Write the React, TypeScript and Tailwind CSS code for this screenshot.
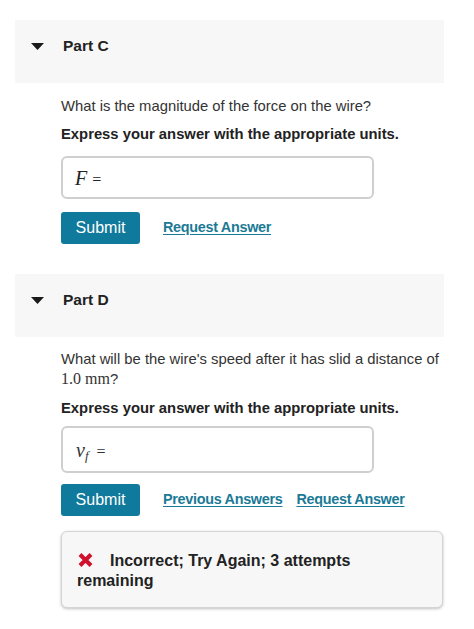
import React from "react";

const Header = ({ title }: { title: string }) => (
  <div className="flex items-center h-[63px] bg-[#f7f7f7] pl-[16px] pb-[11px]">
    <svg width="13" height="7" viewBox="0 0 13 7" className="mr-[19px]">
      <path d="M0 0 H13 L6.5 7 Z" fill="#1a1a1a" />
    </svg>
    <span className="text-[15.5px] font-bold text-[#222]">{title}</span>
  </div>
);

const Link = ({ children }: { children: React.ReactNode }) => (
  <a className="text-[14.4px] tracking-[-0.3px] font-bold text-[#1a7a96] underline underline-offset-2 cursor-pointer">{children}</a>
);

const SubmitButton = () => (
  <button className="w-[79px] h-[32px] rounded-[3px] bg-[#0f7a9b] text-white text-[16px]">Submit</button>
);

const mathFont = { fontFamily: '"Liberation Serif", "DejaVu Serif", serif' };

export default function App() {
  return (
    <div className="min-h-screen bg-white pt-[20px] pl-[15px] pr-[30px] text-[#333]" style={{ fontFamily: '"Liberation Sans", Arial, sans-serif' }}>
      <Header title="Part C" />
      <div className="pl-[46px] pt-[13px]">
        <p className="text-[14.8px] leading-[20px] text-[#333]">What is the magnitude of the force on the wire?</p>
        <p className="mt-[8px] text-[14.8px] leading-[20px] font-bold text-[#222]">Express your answer with the appropriate units.</p>
        <div className="mt-[12px] w-[313px] h-[43px] rounded-[6px] border-2 border-[#cfcfcf] flex items-center pl-[12px]">
          <span className="text-[20px] text-[#222]" style={mathFont}>
            <i>F</i> <span className="text-[16px]">=</span>
          </span>
        </div>
        <div className="mt-[13px] flex items-center gap-[23px]">
          <SubmitButton />
          <Link>Request Answer</Link>
        </div>
      </div>

      <div className="mt-[30px]">
        <Header title="Part D" />
      </div>
      <div className="pl-[46px] pt-[12px]">
        <p className="text-[14.8px] leading-[20px] text-[#333]">
          What will be the wire's speed after it has slid a distance of{" "}
          <span className="text-[16px]" style={mathFont}>1.0 mm</span>?
        </p>
        <p className="mt-[9px] text-[14.8px] leading-[20px] font-bold text-[#222]">Express your answer with the appropriate units.</p>
        <div className="mt-[8px] w-[313px] h-[47px] rounded-[6px] border-2 border-[#cfcfcf] flex items-center pl-[13px]">
          <span className="text-[20px] text-[#333]" style={mathFont}>
            <i>v</i><sub className="text-[13px]"><i>f</i></sub> <span className="text-[16px] ml-[3px]">=</span>
          </span>
        </div>
        <div className="mt-[11px] flex items-center">
          <SubmitButton />
          <div className="ml-[23px] flex gap-[14px]">
            <Link>Previous Answers</Link>
            <Link>Request Answer</Link>
          </div>
        </div>
        <div className="mt-[15px] w-[382px] rounded-[6px] border border-[#d4d4d4] bg-[#f7f7f7] shadow-[0_1px_3px_rgba(0,0,0,0.25)] px-[15px] pt-[19px] pb-[16px]">
          <p className="text-[16px] leading-[20px] font-bold text-[#222]">
            <svg width="15" height="14" viewBox="0 0 15 14" className="inline-block mr-[17px] ml-[1px] align-[-1px]">
              <path d="M2 1.5 L13 12.5 M13 1.5 L2 12.5" stroke="#d0102c" strokeWidth="4" strokeLinecap="butt" />
            </svg>
            Incorrect; Try Again; 3 attempts remaining
          </p>
        </div>
      </div>
    </div>
  );
}
